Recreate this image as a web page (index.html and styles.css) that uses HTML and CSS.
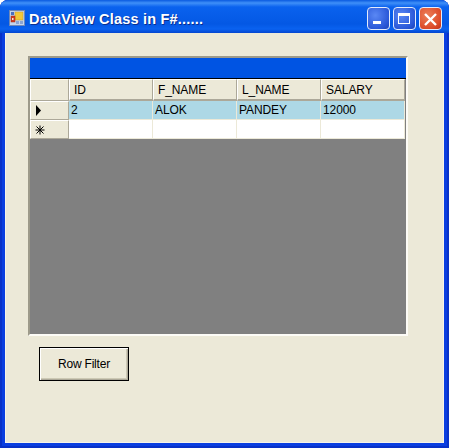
FILE: index.html
```html
<!DOCTYPE html>
<html lang="en">
<head>
    <meta charset="UTF-8">
    <title>DataView Class in F#......</title>
    <link rel="stylesheet" href="styles.css">
</head>
<body>
    <div class="window">
        <!-- Title bar -->
        <div class="titlebar">
            <svg class="app-icon" width="16" height="16" viewBox="0 0 16 16">
                <rect x="0.5" y="0.5" width="15" height="15" fill="#c4d4ec" stroke="#6f88b8"/>
                <rect x="2" y="2" width="3" height="3" fill="#4a6fc0"/>
                <rect x="6" y="2" width="8" height="8" fill="#f4c838" stroke="#c89a20" stroke-width="0.5"/>
                <rect x="2" y="6" width="4" height="6" fill="#d23a20" stroke="#a03018" stroke-width="0.5"/>
                <rect x="3" y="8" width="1.5" height="2" fill="#f4e8d0"/>
                <rect x="7" y="11" width="3" height="3" fill="#8aa4d4"/>
                <rect x="11" y="11" width="3" height="3" fill="#8aa4d4"/>
            </svg>
            <span class="title">DataView Class in F#......</span>
            <div class="controls">
                <div class="ctl">
                    <svg width="23" height="23" viewBox="0 0 23 23"><rect x="6" y="14" width="8" height="3" fill="#fff"/></svg>
                </div>
                <div class="ctl">
                    <svg width="23" height="23" viewBox="0 0 23 23"><rect x="5.5" y="6.5" width="11" height="10" fill="none" stroke="#fff"/><rect x="5" y="6" width="12" height="3" fill="#fff"/></svg>
                </div>
                <div class="ctl close">
                    <svg width="23" height="23" viewBox="0 0 23 23"><path d="M6 7 L17 18 M17 7 L6 18" stroke="#fff" stroke-width="2.4" fill="none"/></svg>
                </div>
            </div>
        </div>

        <div class="client">
            <!-- DataGrid -->
            <div class="grid">
                <div class="caption"></div>
                <div class="row head">
                    <div class="rowhead"></div>
                    <div class="cell">ID</div>
                    <div class="cell">F_NAME</div>
                    <div class="cell">L_NAME</div>
                    <div class="cell">SALARY</div>
                </div>
                <div class="row data">
                    <div class="rowhead">
                        <svg width="8" height="11" viewBox="0 0 8 11"><path d="M1 0 L6 5.5 L1 11 Z" fill="#000"/></svg>
                    </div>
                    <div class="cell">2</div>
                    <div class="cell">ALOK</div>
                    <div class="cell">PANDEY</div>
                    <div class="cell">12000</div>
                </div>
                <div class="row new">
                    <div class="rowhead">
                        <svg width="10" height="10" viewBox="0 0 10 10"><path d="M5 0.5 V9.5 M0.5 5 H9.5 M1.5 1.5 L8.5 8.5 M8.5 1.5 L1.5 8.5" stroke="#000" stroke-width="1" fill="none"/></svg>
                    </div>
                    <div class="cell"></div>
                    <div class="cell"></div>
                    <div class="cell"></div>
                    <div class="cell"></div>
                </div>
            </div>

            <button class="filter">Row Filter</button>
        </div>
    </div>
</body>
</html>
```

FILE: styles.css
```css
body {
    margin: 0;
    background: #fff;
    font-family: "Liberation Sans", Arial, sans-serif;
}

/* Window frame */
.window {
    width: 449px;
    height: 448px;
    box-sizing: border-box;
    background: #0a3ee0;
    border-radius: 8px 8px 0 0;
    padding: 0 5px 5px 5px;
    display: flex;
    flex-direction: column;
    box-shadow: inset 2px 0 #0831c8, inset -2px 0 #0831c8, inset 0 -2px #0831c8;
}

.titlebar {
    height: 33px;
    flex: none;
    margin: 0 -5px;
    padding: 0 5px 0 9px;
    border-radius: 8px 8px 0 0;
    background: linear-gradient(#0a5ae0 0, #3f90f8 3px, #0a62ee 7px, #0458e4 24px, #0a62f0 29px, #0446d0 33px);
    display: flex;
    align-items: center;
}

.app-icon {
    flex: none;
    margin-right: 4px;
    margin-top: 3px;
}

.title {
    color: #fff;
    font-weight: bold;
    font-size: 14.5px;
    letter-spacing: 0.2px;
    text-shadow: 1px 1px #0a2f90;
    margin-top: 4px;
}

.controls {
    margin-left: auto;
    margin-top: 4px;
    margin-right: 2px;
    display: flex;
    gap: 3px;
}

.ctl {
    width: 23px;
    height: 23px;
    box-sizing: border-box;
    border: 1px solid #e4ecfc;
    border-radius: 4px;
    background: radial-gradient(circle at 35% 35%, #5a88f4, #2a58d8 70%, #1c44b8);
    overflow: hidden;
}

.ctl svg {
    display: block;
    margin: -1px;
}

.ctl.close {
    background: radial-gradient(circle at 35% 35%, #ec7f58, #dc4a28 70%, #b83018);
}

/* Form area */
.client {
    flex: 1;
    background: #ece9d8;
    border-left: 1px solid #f6f4ea;
    border-right: 1px solid #f6f4ea;
    border-bottom: 1px solid #f6f4ea;
    padding: 23px 0 0 22px;
}

.grid {
    width: 376px;
    height: 276px;
    background: #808080;
    border: 2px solid;
    border-color: #9d9a8a #fcfbf6 #fcfbf6 #9d9a8a;
}

.caption {
    height: 20px;
    background: #0054e3;
    border-bottom: 1px solid #000;
}

.row {
    display: flex;
}

.rowhead {
    width: 39px;
    flex: none;
    box-sizing: border-box;
    background: #ece9d8;
    display: flex;
    align-items: center;
    padding-left: 4px;
    border-top: 1px solid #fff;
    border-left: 1px solid #fff;
    border-right: 1px solid #aca899;
    border-bottom: 1px solid #aca899;
}

.cell {
    width: 84px;
    box-sizing: border-box;
    font-size: 12px;
    letter-spacing: -0.1px;
    color: #000;
    padding-left: 2px;
    display: flex;
    align-items: center;
}

/* Column headers */
.head {
    height: 22px;
}

.head .cell {
    background: #ece9d8;
    padding-left: 4px;
    border-top: 1px solid #fff;
    border-left: 1px solid #fff;
    border-right: 1px solid #aca899;
    border-bottom: 2px solid #aca899;
}

.data {
    height: 19px;
}

.data .cell {
    background: #add8e6;
    border-right: 1px solid #ece9d8;
    border-bottom: 1px solid #ece9d8;
}

.new {
    height: 19px;
}

.new .cell {
    background: #fff;
    border-right: 1px solid #ece9d8;
    border-bottom: 1px solid #ece9d8;
}

.filter {
    display: block;
    width: 90px;
    height: 34px;
    margin: 11px 0 0 11px;
    padding: 0;
    font-family: "Liberation Sans", Arial, sans-serif;
    font-size: 12px;
    letter-spacing: -0.2px;
    color: #000;
    background: #ece9d8;
    border: 1px solid #000;
    border-radius: 0;
    box-shadow: inset 1px 1px #fff, inset -1px -1px #aca899, inset -2px -2px #ccc8b4;
}
```
